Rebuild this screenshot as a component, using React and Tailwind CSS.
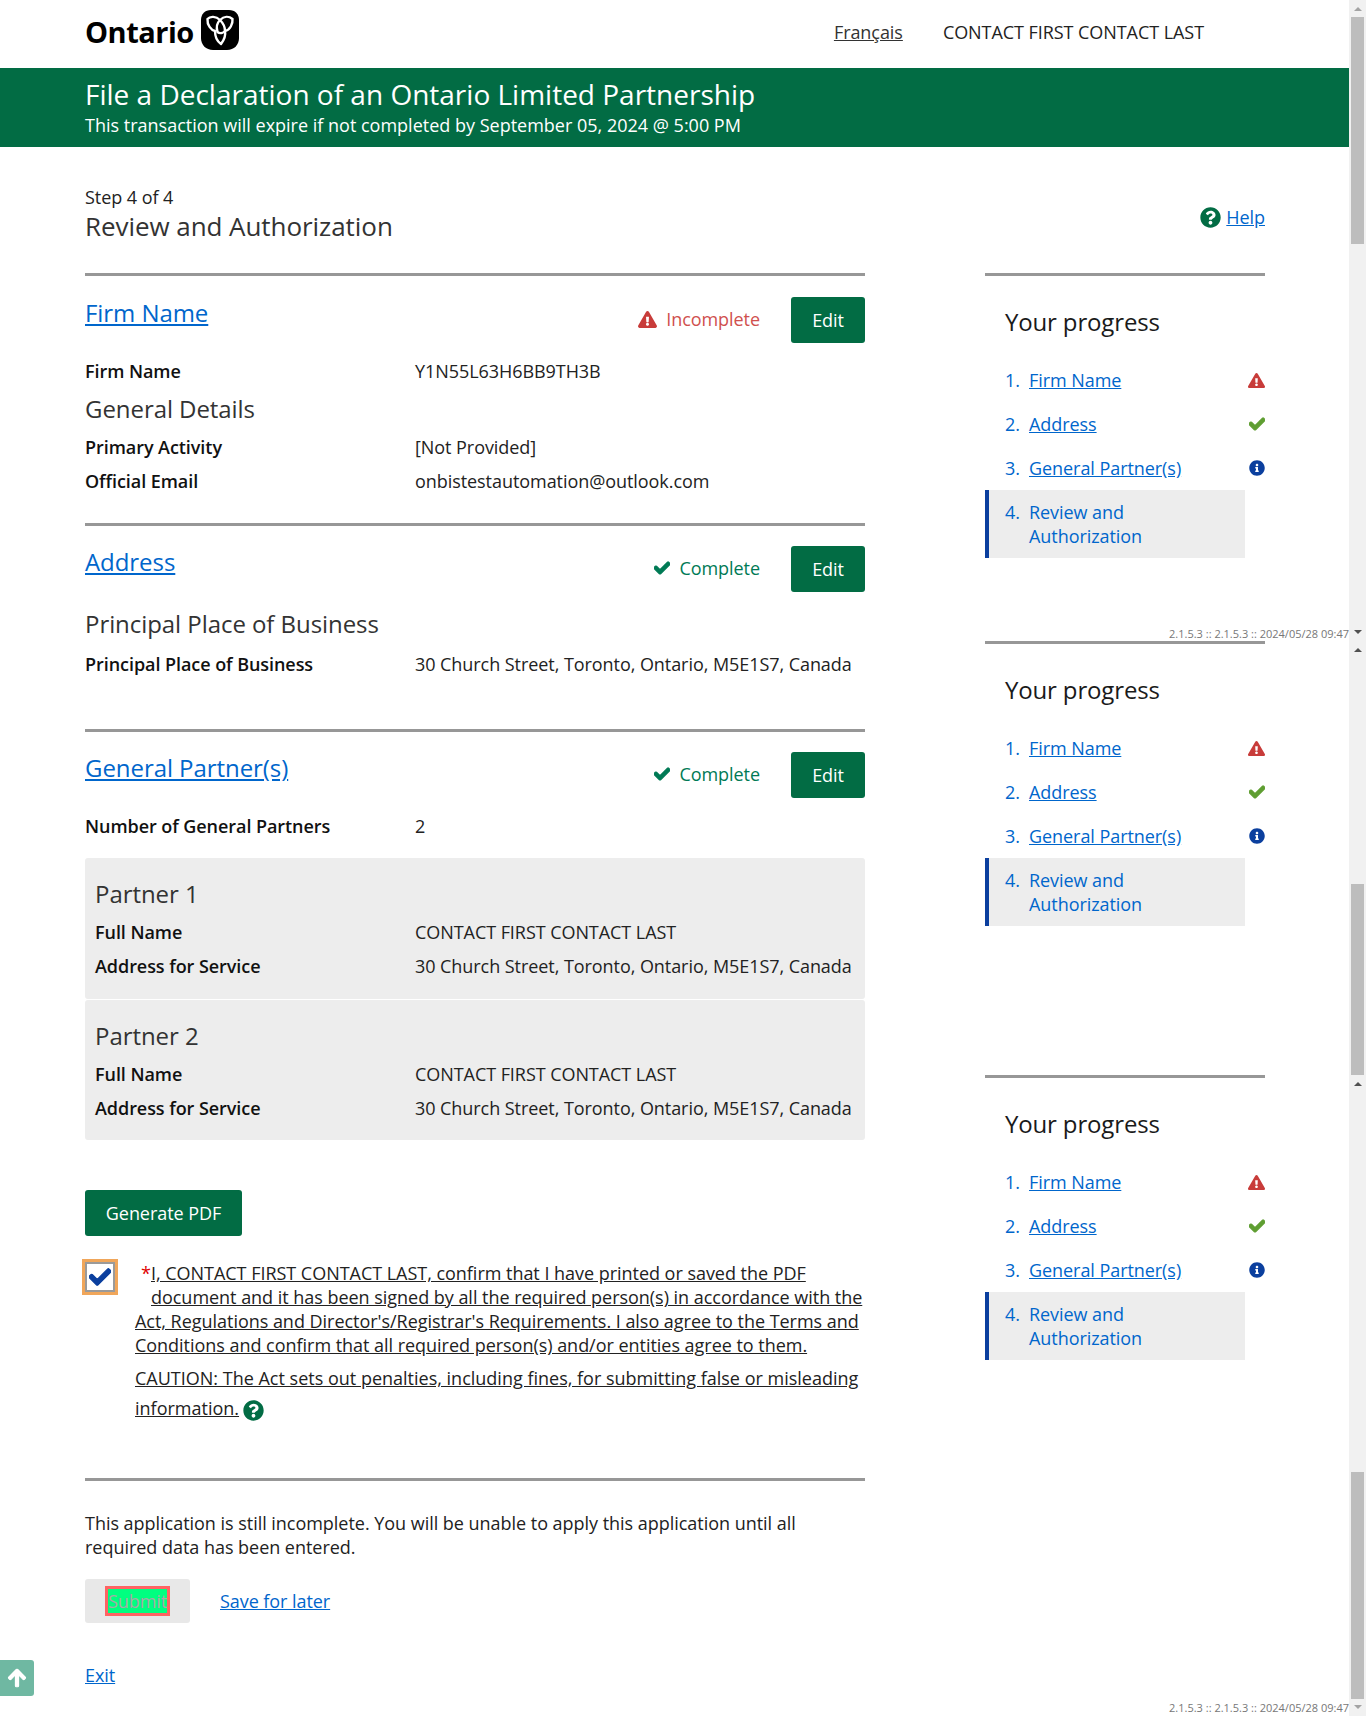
import React from 'react';
import { FaExclamationTriangle, FaCheck, FaInfoCircle, FaQuestionCircle, FaArrowUp } from 'react-icons/fa';

const VERSION = '2.1.5.3 :: 2.1.5.3 :: 2024/05/28 09:47';
const ADDRESS = '30 Church Street, Toronto, Ontario, M5E1S7, Canada';
const CONTACT = 'CONTACT FIRST CONTACT LAST';

// Ontario trillium shield
const OntarioLogo = () => (
  <svg width="38" height="40" viewBox="0 0 38 40">
    <path d="M10 0H28C34 0 38 4 38 10V28C38 35 33 40 26 40H12C5 40 0 35 0 28V10C0 4 4 0 10 0Z" fill="#000" />
    <g fill="none" stroke="#fff" strokeWidth="2.4" strokeLinejoin="round">
      <path d="M19 10C15 6 9 6 6.500 9C6 15 10 20 14 21C14 27 17 32 20 34C23 30 25 26 24 21C29 20 32 14 31.500 9C28 6 23 6 19 10Z" />
      <path d="M19 10C16 13 15 17 16.500 22C20 25 24 21 24 21C24 16 22 13 19 10Z" />
    </g>
  </svg>
);

const SectionHeader = ({ title, complete }) => (
  <div className="flex items-start justify-between">
    <a href="#" className="-mt-[1px] text-[24px] leading-[34px] text-[#0066cc] underline">{title}</a>
    <div className="flex items-center">
      {complete ? (
        <span className="-mt-[2px] flex items-center text-[18px] text-[#007a55]">
          <FaCheck className="mr-[9px] text-[16px] [stroke-width:40px]" />
          Complete
        </span>
      ) : (
        <span className="-mt-[2px] flex items-center text-[18px] text-[#d0504e]">
          <FaExclamationTriangle className="mr-[9px] text-[19px] text-[#c83c3a]" />
          Incomplete
        </span>
      )}
      <button className="ml-[31px] h-[46px] w-[74px] rounded-[3px] bg-[#026c44] text-[18px] text-white">Edit</button>
    </div>
  </div>
);

const Row = ({ label, value, className = 'mt-[10px]', labelWidth = 'w-[330px]' }) => (
  <div className={`flex h-[24px] items-center leading-[24px] ${className}`}>
    <div className={`${labelWidth} shrink-0 font-semibold text-[#111]`}>{label}</div>
    <div className="text-[#222]">{value}</div>
  </div>
);

const Partner = ({ name, className }) => (
  <div className={`rounded-[3px] bg-[#ededed] pl-[10px] pr-[10px] pt-[19px] ${className}`}>
    <div className="text-[24px] leading-[34px] text-[#333]">{name}</div>
    <Row label="Full Name" value={CONTACT} labelWidth="w-[320px]" className="mt-[9px]" />
    <Row label="Address for Service" value={ADDRESS} labelWidth="w-[320px]" className="mt-[10px]" />
  </div>
);

const ProgressPanel = ({ className = '' }) => (
  <div className={className}>
    <div className="h-[3px] bg-[#979797]" />
    <div className="mt-[28px] pl-[20px] text-[24px] leading-[36px] tracking-[-0.15px] text-[#1a1a1a]">Your progress</div>
    <div className="mt-[18px] flex h-[44px] items-center">
      <span className="w-[24px] pl-[20px] box-content text-[#0066cc]">1.</span>
      <a href="#" className="text-[#0066cc] underline">Firm Name</a>
      <FaExclamationTriangle className="ml-auto text-[17px] text-[#c83c3a]" />
    </div>
    <div className="flex h-[44px] items-center">
      <span className="w-[24px] pl-[20px] box-content text-[#0066cc]">2.</span>
      <a href="#" className="text-[#0066cc] underline">Address</a>
      <FaCheck className="ml-auto text-[16px] text-[#5f9e32] [stroke-width:40px]" />
    </div>
    <div className="flex h-[44px] items-center">
      <span className="w-[24px] pl-[20px] box-content text-[#0066cc]">3.</span>
      <a href="#" className="text-[#0066cc] underline">General Partner(s)</a>
      <FaInfoCircle className="ml-auto text-[16px] text-[#0b3f9e]" />
    </div>
    <div className="flex h-[68px] w-[260px] items-start border-l-4 border-[#0b3f9e] bg-[#ededed] pt-[10px] leading-[24px]">
      <span className="w-[24px] pl-[16px] box-content text-[#0066cc]">4.</span>
      <span className="text-[#0066cc]">Review and<br />Authorization</span>
    </div>
  </div>
);

const ScrollUp = ({ className = '' }) => (
  <div className={`mx-auto h-0 w-0 border-x-[4px] border-b-[4px] border-x-transparent border-b-[#505050] ${className}`} />
);
const ScrollDown = ({ className = '' }) => (
  <div className={`mx-auto h-0 w-0 border-x-[4px] border-t-[4px] border-x-transparent border-t-[#505050] ${className}`} />
);

const Scrollbar = () => (
  <div className="flex w-[17px] shrink-0 flex-col bg-[#f1f1f1] pt-[7px]">
    <ScrollUp className="border-b-[#a3a3a3]" />
    <div className="ml-[2px] mt-[6px] h-[227px] w-[13px] bg-[#bdbdbd]" />
    <ScrollDown className="mt-[386px]" />
    <ScrollUp className="mt-[14px]" />
    <div className="ml-[2px] mt-[232px] h-[191px] w-[13px] bg-[#bdbdbd]" />
    <ScrollUp className="mt-[7px]" />
    <div className="ml-[2px] mt-[386px] h-[227px] w-[13px] bg-[#bdbdbd]" />
    <ScrollDown className="mt-[6px] border-t-[#a3a3a3]" />
  </div>
);

export default function App() {
  return (
    <div className="relative flex h-[1716px] w-[1366px] overflow-hidden bg-white font-['Open_Sans',sans-serif] text-[18px] tracking-[-0.06px] text-[#1a1a1a]">
      <div className="w-[1349px] shrink-0">
        {/* header */}
        <div className="flex h-[68px] items-center pb-[4px] pl-[85px] pr-[145px]">
          <span className="text-[29px] font-bold tracking-[-0.5px] text-black">Ontario</span>
          <div className="ml-[7px] -mt-[4px]"><OntarioLogo /></div>
          <a href="#" className="ml-auto text-[#333] underline">Français</a>
          <span className="ml-[40px] text-[#222]">{CONTACT}</span>
        </div>

        {/* banner */}
        <div className="h-[79px] bg-[#026c44] pl-[85px] pt-[8px] tracking-normal text-white">
          <div className="text-[28px] leading-[37px]">File a Declaration of an Ontario Limited Partnership</div>
          <div className="text-[18px] leading-[24px]">This transaction will expire if not completed by September 05, 2024 @ 5:00 PM</div>
        </div>

        <div className="flex pl-[85px] pr-[84px]">
          {/* main column */}
          <div className="w-[780px] shrink-0">
            <div className="pt-[38px] leading-[24px] text-[#222]">Step 4 of 4</div>
            <div className="-mt-[1px] text-[26px] leading-[36px] text-[#333]">Review and Authorization</div>

            <div className="mt-[29px] h-[3px] bg-[#979797]" />
            <div className="pt-[21px]"><SectionHeader title="Firm Name" /></div>
            <Row label="Firm Name" value="Y1N55L63H6BB9TH3B" className="mt-[16px]" />
            <div className="mt-[9px] text-[24px] leading-[34px] text-[#333]">General Details</div>
            <Row label="Primary Activity" value="[Not Provided]" className="mt-[9px]" />
            <Row label="Official Email" value="onbistestautomation@outlook.com" className="mt-[10px]" />

            <div className="mt-[30px] h-[3px] bg-[#979797]" />
            <div className="pt-[20px]"><SectionHeader title="Address" complete /></div>
            <div className="mt-[15px] text-[24px] leading-[34px] text-[#333]">Principal Place of Business</div>
            <Row label="Principal Place of Business" value={ADDRESS} className="mt-[11px]" />

            <div className="mt-[53px] h-[3px] bg-[#979797]" />
            <div className="pt-[20px]"><SectionHeader title="General Partner(s)" complete /></div>
            <Row label="Number of General Partners" value="2" className="mt-[16px]" />

            <div className="mt-[20px] flex flex-col gap-[1px]">
              <Partner name="Partner 1" className="h-[141px]" />
              <Partner name="Partner 2" className="h-[140px]" />
            </div>

            <button className="mt-[50px] h-[46px] w-[157px] rounded-[3px] bg-[#026c44] text-[18px] text-white">Generate PDF</button>

            {/* confirmation */}
            <div className="mt-[23px] flex">
              <div className="-ml-[3px] flex h-[36px] w-[36px] shrink-0 items-center justify-center border-[3px] border-[#f0a65a]">
                <div className="flex h-[30px] w-[30px] items-center justify-center border-[2px] border-[#9a9a9a] bg-white">
                  <FaCheck className="text-[22px] text-[#0b3f9e] [stroke-width:30px]" />
                </div>
              </div>
              <div className="ml-[17px] pt-[2px] leading-[24px] tracking-[-0.03px] text-[#222]">
                <div className="float-left h-[48px] w-[16px] text-right text-[#e00000]">*</div>
                <p className="underline">I, CONTACT FIRST CONTACT LAST, confirm that I have printed or saved the PDF document and it has been signed by all the required person(s) in accordance with the Act, Regulations and Director's/Registrar's Requirements. I also agree to the Terms and Conditions and confirm that all required person(s) and/or entities agree to them.</p>
                <p className="mt-[6px] leading-[30px] tracking-normal">
                  <span className="underline">CAUTION: The Act sets out penalties, including fines, for submitting false or misleading information.</span>
                  <FaQuestionCircle className="ml-[4px] inline text-[21px] text-[#026c44]" />
                </p>
              </div>
            </div>

            <div className="mt-[55px] h-[3px] bg-[#979797]" />
            <p className="mt-[30px] leading-[24px] tracking-[-0.03px] text-[#222]">This application is still incomplete. You will be unable to apply this application until all required data has been entered.</p>

            <div className="mt-[20px] flex items-center">
              <div className="flex h-[44px] w-[105px] items-center justify-center rounded-[3px] bg-[#e8e8e8]">
                <div className="flex h-[30px] w-[65px] items-center justify-center overflow-hidden border-[3px] border-[#ff6363] bg-[#00ff80] text-[#a8a8a8]">Submit</div>
              </div>
              <a href="#" className="ml-[30px] text-[#0066cc] underline">Save for later</a>
            </div>
            <a href="#" className="mt-[40px] block leading-[24px] text-[#0066cc] underline">Exit</a>
          </div>

          {/* sidebar */}
          <div className="ml-[120px] w-[280px] shrink-0">
            <div className="flex h-[126px] items-center justify-end pt-[14px]">
              <FaQuestionCircle className="mr-[5px] text-[21px] text-[#026c44]" />
              <a href="#" className="text-[#0066cc] underline">Help</a>
            </div>
            <ProgressPanel />
            <ProgressPanel className="mt-[83px]" />
            <ProgressPanel className="mt-[149px]" />
          </div>
        </div>
      </div>
      <Scrollbar />

      {/* things that float over the page */}
      <div className="absolute right-[17px] top-[626px] text-[11px] leading-[16px] tracking-normal text-[#777]">{VERSION}</div>
      <div className="absolute right-[17px] top-[1700px] text-[11px] leading-[16px] tracking-normal text-[#777]">{VERSION}</div>
      <div className="absolute left-0 top-[1660px] flex h-[36px] w-[34px] items-center justify-center rounded-r-[3px] bg-[#6fb8a2] text-white">
        <FaArrowUp className="text-[20px] [stroke-width:30px]" />
      </div>
    </div>
  );
}
